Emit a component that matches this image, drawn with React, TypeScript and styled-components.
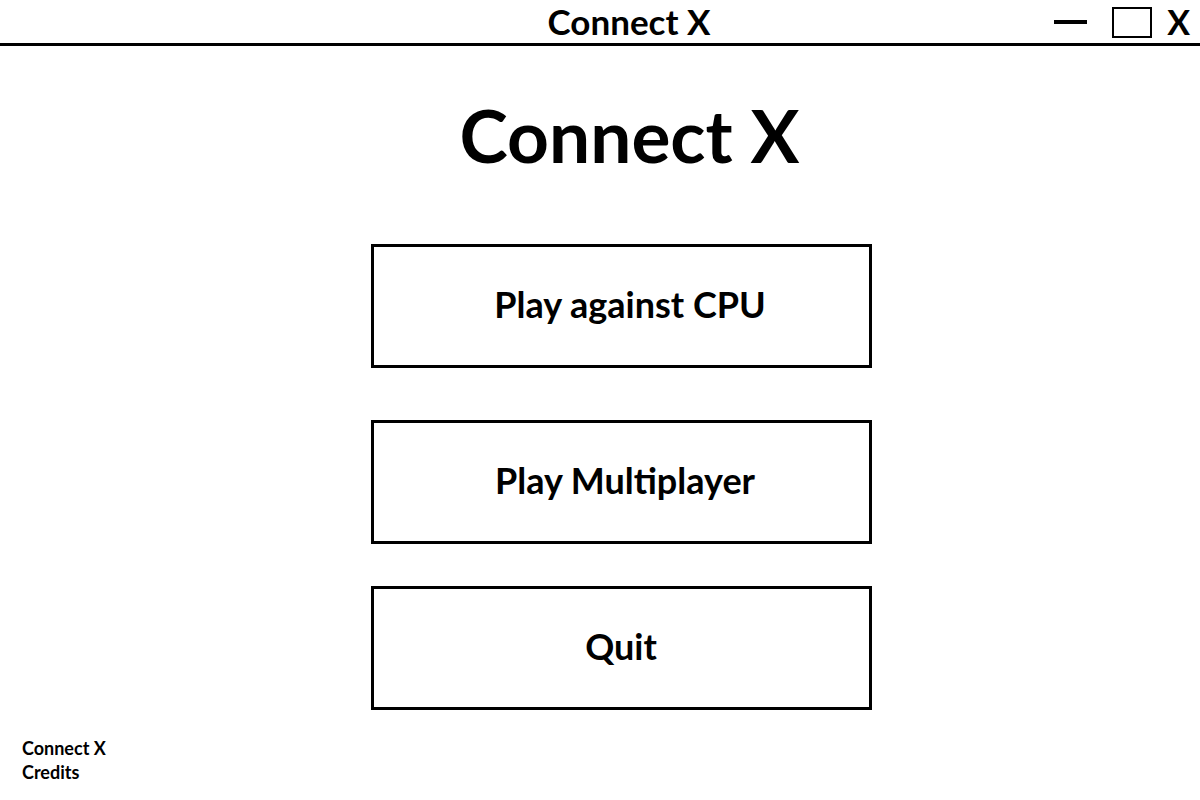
import styled, { createGlobalStyle } from "styled-components";

const GlobalStyle = createGlobalStyle`
  html, body {
    margin: 0;
    padding: 0;
    background: #ffffff;
  }
  body {
    font-family: Lato, "Open Sans", "Liberation Sans", sans-serif;
    color: #000000;
  }
`;

const Window = styled.div`
  width: 1200px;
  height: 800px;
  display: flex;
  flex-direction: column;
  background: #ffffff;
  overflow: hidden;
`;

const TitleBar = styled.div`
  height: 43px;
  border-bottom: 3px solid #000000;
  display: grid;
  grid-template-columns: 1fr auto 1fr;
  align-items: center;
`;

const TitleBarText = styled.div`
  grid-column: 2;
  font-size: 35px;
  font-weight: 700;
  line-height: 43px;
  padding-left: 58px;
`;

const WindowControls = styled.div`
  grid-column: 3;
  justify-self: end;
  display: flex;
  align-items: center;
  height: 43px;
  padding-right: 10px;
`;

const MinimizeIcon = styled.div`
  width: 33px;
  height: 4px;
  background: #000000;
  margin-right: 25px;
`;

const MaximizeIcon = styled.div`
  width: 36px;
  height: 27px;
  border: 2px solid #000000;
  margin-right: 15px;
  margin-top: 2px;
`;

const CloseGlyph = styled.div`
  font-size: 34px;
  font-weight: 700;
  line-height: 43px;
`;

const Main = styled.main`
  flex: 1;
  display: flex;
  flex-direction: column;
  align-items: center;
  padding-left: 42px;
`;

const Heading = styled.h1`
  margin: 46px 0 0 17px;
  font-size: 73px;
  font-weight: 700;
  line-height: 87px;
`;

const MenuList = styled.div`
  margin-top: 65px;
  display: flex;
  flex-direction: column;
`;

const MenuButton = styled.button<{ $gap: number; $shift?: number }>`
  box-sizing: border-box;
  width: 501px;
  height: 124px;
  margin-top: ${(p) => p.$gap}px;
  border: 3px solid #000000;
  background: #ffffff;
  font-family: Lato, "Open Sans", "Liberation Sans", sans-serif;
  font-size: 36px;
  font-weight: 700;
  color: #000000;
  padding: 0 0 4px ${(p) => p.$shift ?? 0}px;
  cursor: pointer;
`;

const Footer = styled.div`
  padding: 0 0 16px 22px;
  font-size: 18px;
  font-weight: 700;
  line-height: 24px;
`;

const App = () => {
  return (
    <>
      <GlobalStyle />
      <Window>
        <TitleBar>
          <TitleBarText>Connect X</TitleBarText>
          <WindowControls>
            <MinimizeIcon />
            <MaximizeIcon />
            <CloseGlyph>X</CloseGlyph>
          </WindowControls>
        </TitleBar>
        <Main>
          <Heading>Connect X</Heading>
          <MenuList>
            <MenuButton $gap={0} $shift={18}>Play against CPU</MenuButton>
            <MenuButton $gap={52} $shift={8}>Play Multiplayer</MenuButton>
            <MenuButton $gap={42}>Quit</MenuButton>
          </MenuList>
        </Main>
        <Footer>
          Connect X
          <br />
          Credits
        </Footer>
      </Window>
    </>
  );
};

export default App;
